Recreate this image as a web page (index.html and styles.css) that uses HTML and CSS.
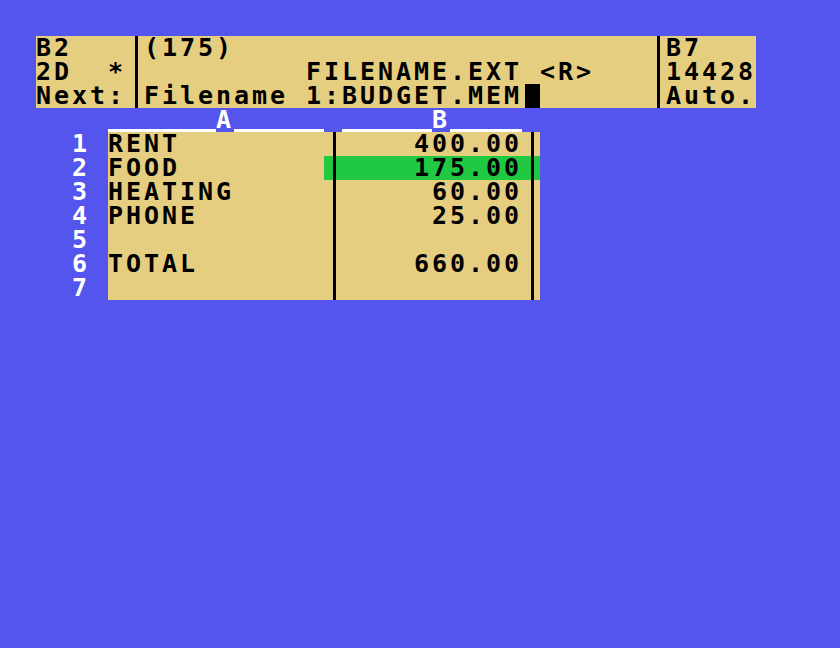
FILE: index.html
```html
<!DOCTYPE html>
<html>
<head>
<meta charset="utf-8">
<link rel="stylesheet" href="styles.css">
</head>
<body>
<div class="screen">
  <div class="status">
    <div class="panel side">
      <div class="ln">B2</div>
      <div class="ln">2D  *</div>
      <div class="ln">Next:</div>
    </div>
    <div class="vline"></div>
    <div class="panel mid">
      <div class="ln">(175)</div>
      <div class="ln">         FILENAME.EXT &lt;R&gt;</div>
      <div class="ln">Filename 1:BUDGET.MEM<span class="cursor"></span></div>
    </div>
    <div class="vline"></div>
    <div class="panel side">
      <div class="ln">B7</div>
      <div class="ln">14428</div>
      <div class="ln">Auto.</div>
    </div>
  </div>

  <div class="sheet">
    <div class="hdr">
      <div class="rn"></div>
      <div class="hcol">
        <span class="ul w108"></span><span class="hl">A</span><span class="ul w90"></span>
      </div>
      <div class="hgap"></div>
      <div class="hcol">
        <span class="ul w90"></span><span class="hl">B</span><span class="ul w72"></span>
      </div>
      <div class="hgap"></div>
    </div>

    <div class="row">
      <div class="rn">1</div>
      <div class="ca">RENT</div>
      <div class="bgrp"><div class="vline"></div><div class="cb">400.00</div><div class="vline"></div></div>
    </div>
    <div class="row">
      <div class="rn">2</div>
      <div class="ca">FOOD</div>
      <div class="bgrp hi"><div class="vline"></div><div class="cb">175.00</div><div class="vline"></div></div>
    </div>
    <div class="row">
      <div class="rn">3</div>
      <div class="ca">HEATING</div>
      <div class="bgrp"><div class="vline"></div><div class="cb">60.00</div><div class="vline"></div></div>
    </div>
    <div class="row">
      <div class="rn">4</div>
      <div class="ca">PHONE</div>
      <div class="bgrp"><div class="vline"></div><div class="cb">25.00</div><div class="vline"></div></div>
    </div>
    <div class="row">
      <div class="rn">5</div>
      <div class="ca"></div>
      <div class="bgrp"><div class="vline"></div><div class="cb"></div><div class="vline"></div></div>
    </div>
    <div class="row">
      <div class="rn">6</div>
      <div class="ca">TOTAL</div>
      <div class="bgrp"><div class="vline"></div><div class="cb">660.00</div><div class="vline"></div></div>
    </div>
    <div class="row">
      <div class="rn">7</div>
      <div class="ca"></div>
      <div class="bgrp"><div class="vline"></div><div class="cb"></div><div class="vline"></div></div>
    </div>
  </div>
</div>
</body>
</html>
```
FILE: styles.css
```css
html, body {
  margin: 0;
  padding: 0;
}
body {
  background: #5455ED;
  width: 840px;
  height: 648px;
  overflow: hidden;
  font-family: "DejaVu Sans Mono", "Liberation Mono", monospace;
  font-size: 25px;
  font-weight: bold;
  letter-spacing: 2.95px;
  line-height: 24px;
  color: #000;
}
.screen {
  padding: 36px 0 0 36px;
}
.status {
  display: flex;
  width: 720px;
  height: 72px;
  background: #E6CE80;
}
.panel {
  display: flex;
  flex-direction: column;
}
.side {
  width: 90px;
}
.mid {
  width: 504px;
}
.ln {
  height: 24px;
  white-space: pre;
}
.vline {
  width: 18px;
  flex: none;
}
.vline::before {
  content: "";
  display: block;
  width: 3px;
  height: 100%;
  margin-left: 9px;
  background: #000;
}
.cursor {
  display: inline-block;
  width: 15px;
  height: 24px;
  margin-left: 3px;
  background: #000;
  vertical-align: top;
}
.sheet {
  display: flex;
  flex-direction: column;
}
.hdr, .row {
  display: flex;
  height: 24px;
}
.rn {
  width: 54px;
  padding-right: 18px;
  flex: none;
  text-align: right;
  color: #fff;
}
.hcol {
  display: flex;
  height: 24px;
}
.ul {
  display: block;
  height: 21px;
  border-bottom: 3px solid #fff;
}
.w108 { width: 108px; }
.w90 { width: 90px; }
.w72 { width: 72px; }
.hl {
  display: block;
  width: 18px;
  color: #fff;
}
.hgap {
  width: 18px;
}
.ca {
  width: 216px;
  flex: none;
  background: #E6CE80;
  white-space: pre;
}
.bgrp {
  display: flex;
  width: 216px;
  flex: none;
  background: #E6CE80;
}
.bgrp.hi {
  background: #21C842;
}
.cb {
  width: 180px;
  text-align: right;
  white-space: pre;
}
```
